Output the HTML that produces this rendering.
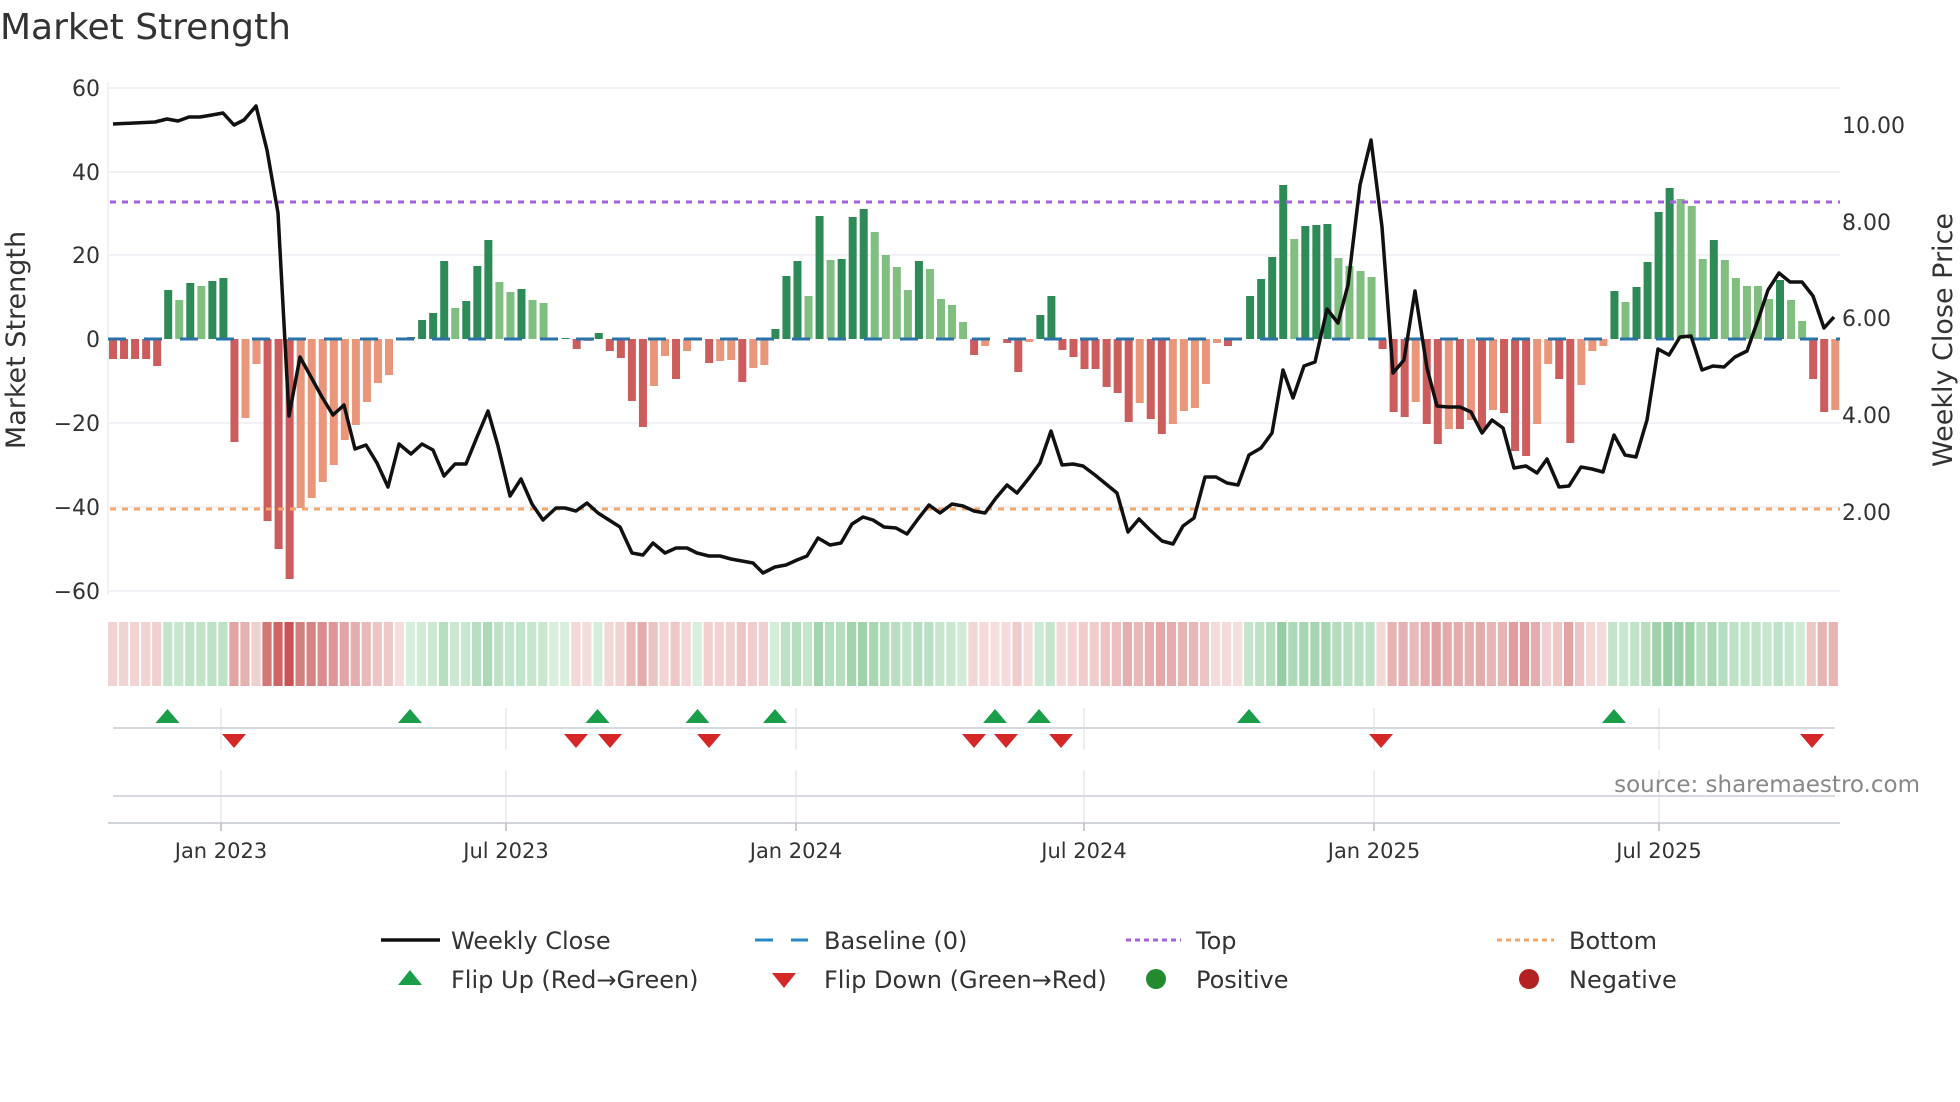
<!DOCTYPE html>
<html><head><meta charset="utf-8"><style>
html,body{margin:0;padding:0;background:#fff;}
svg{display:block;font-family:"DejaVu Sans","Liberation Sans",sans-serif;}
</style></head><body>
<svg id="s" width="1960" height="1102" viewBox="0 0 1960 1102" xmlns="http://www.w3.org/2000/svg">
<rect width="1960" height="1102" fill="#fff"/>
<text x="0" y="39" font-size="36" fill="#333">Market Strength</text>
<g stroke="#eceef3" stroke-width="1.5">
<line x1="108" y1="88" x2="1840" y2="88"/><line x1="108" y1="172" x2="1840" y2="172"/>
<line x1="108" y1="255" x2="1840" y2="255"/><line x1="108" y1="423" x2="1840" y2="423"/>
<line x1="108" y1="507" x2="1840" y2="507"/><line x1="108" y1="591" x2="1840" y2="591"/>
<line x1="108" y1="82" x2="108" y2="595"/>
</g>
<g font-size="22" fill="#333" text-anchor="end">
<text x="100" y="96">60</text><text x="100" y="180">40</text><text x="100" y="263">20</text>
<text x="100" y="347">0</text><text x="100" y="431">−20</text><text x="100" y="515">−40</text><text x="100" y="599">−60</text>
</g>
<g font-size="22" fill="#333">
<text x="1842" y="133">10.00</text><text x="1842" y="230">8.00</text><text x="1842" y="326">6.00</text>
<text x="1842" y="423">4.00</text><text x="1842" y="520">2.00</text>
</g>
<text transform="translate(25,340) rotate(-90)" font-size="27" fill="#333" text-anchor="middle">Market Strength</text>
<text transform="translate(1952,340) rotate(-90)" font-size="27" fill="#333" text-anchor="middle">Weekly Close Price</text>
<g id="bars"></g>
<line x1="108" y1="339" x2="1840" y2="339" stroke="#2a72a8" stroke-width="3" stroke-dasharray="18,18"/>
<line x1="110" y1="202" x2="1840" y2="202" stroke="#a461e0" stroke-width="3" stroke-dasharray="6,6"/>
<line x1="110" y1="509" x2="1840" y2="509" stroke="#f2a86b" stroke-width="3" stroke-dasharray="6,6"/>
<polyline id="pl" fill="none" stroke="#111" stroke-width="3.5" stroke-linejoin="round"/>
<g id="strip"></g>
<g stroke="#e6e9ee" stroke-width="1.5">
<line x1="221" y1="708" x2="221" y2="750"/><line x1="506" y1="708" x2="506" y2="750"/><line x1="796" y1="708" x2="796" y2="750"/>
<line x1="1084" y1="708" x2="1084" y2="750"/><line x1="1374" y1="708" x2="1374" y2="750"/><line x1="1659" y1="708" x2="1659" y2="750"/>
<line x1="221" y1="770" x2="221" y2="823"/><line x1="506" y1="770" x2="506" y2="823"/><line x1="796" y1="770" x2="796" y2="823"/>
<line x1="1084" y1="770" x2="1084" y2="823"/><line x1="1374" y1="770" x2="1374" y2="823"/><line x1="1659" y1="770" x2="1659" y2="823"/>
</g>
<line x1="113" y1="728" x2="1835" y2="728" stroke="#d6d9de" stroke-width="2"/>
<line x1="113" y1="796" x2="1835" y2="796" stroke="#d6d9de" stroke-width="2"/>
<line x1="108" y1="823" x2="1840" y2="823" stroke="#d0d3d8" stroke-width="2"/>
<g stroke="#bbb" stroke-width="1.5">
<line x1="221" y1="823" x2="221" y2="831"/><line x1="506" y1="823" x2="506" y2="831"/><line x1="796" y1="823" x2="796" y2="831"/>
<line x1="1084" y1="823" x2="1084" y2="831"/><line x1="1374" y1="823" x2="1374" y2="831"/><line x1="1659" y1="823" x2="1659" y2="831"/>
</g>
<g id="tri"></g>
<g font-size="21" fill="#333" text-anchor="middle">
<text x="221" y="858">Jan 2023</text><text x="506" y="858">Jul 2023</text><text x="796" y="858">Jan 2024</text>
<text x="1084" y="858">Jul 2024</text><text x="1374" y="858">Jan 2025</text><text x="1659" y="858">Jul 2025</text>
</g>
<text x="1920" y="792" font-size="23" fill="#888" text-anchor="end">source: sharemaestro.com</text>
<g font-size="24" fill="#333">
<line x1="381" y1="940" x2="440" y2="940" stroke="#111" stroke-width="3.5"/>
<text x="451" y="949">Weekly Close</text>
<line x1="755" y1="940" x2="808" y2="940" stroke="#2a88c8" stroke-width="3" stroke-dasharray="18,18"/>
<text x="824" y="949">Baseline (0)</text>
<line x1="1126" y1="940" x2="1181" y2="940" stroke="#a461e0" stroke-width="3" stroke-dasharray="5,4"/>
<text x="1196" y="949">Top</text>
<line x1="1497" y1="940" x2="1554" y2="940" stroke="#f2a86b" stroke-width="3" stroke-dasharray="5,4"/>
<text x="1569" y="949">Bottom</text>
<polygon points="398,985 422,985 410,970" fill="#1a9e4a"/>
<text x="451" y="988">Flip Up (Red→Green)</text>
<polygon points="772,973 796,973 784,988" fill="#d62728"/>
<text x="824" y="988">Flip Down (Green→Red)</text>
<circle cx="1156" cy="979" r="10" fill="#228b30"/>
<text x="1196" y="988">Positive</text>
<circle cx="1529" cy="979" r="10" fill="#b22222"/>
<text x="1569" y="988">Negative</text>
</g>
</svg>
<script>
var NS="http://www.w3.org/2000/svg";
var v="-20d,-20d,-20d,-20d,-27d,49d,39l,56d,53l,58d,61d,-103d,-79l,-25l,-182d,-210d,-240d,-169l,-159l,-143l,-126l,-101l,-86l,-63l,-44l,-36l,-1l,2d,19d,26d,78d,31l,38d,73d,99d,57l,47l,50d,39l,36l,0l,1d,-10d,-2l,6d,-12d,-19d,-62d,-88d,-47l,-17l,-40d,-12l,1d,-24d,-22l,-21l,-43d,-29l,-26l,10d,63d,78d,43l,123d,79l,80d,122d,130d,107l,84l,72l,49l,78d,70l,40l,34l,17l,-16d,-7l,0l,-4d,-33d,-3l,24d,43d,-11d,-18d,-30d,-30d,-48d,-54d,-83d,-64l,-80d,-95d,-85l,-72l,-69l,-45l,-4l,-7d,0l,43d,60d,82d,154d,100l,113d,114d,115d,81l,73l,68l,62l,-10d,-73d,-78d,-63l,-85d,-105d,-90l,-90d,-81l,-90d,-71l,-74d,-112d,-117d,-85l,-25l,-40d,-104d,-46l,-12l,-7l,48d,37l,52d,77d,127d,151d,140l,133l,80l,99d,79l,61l,53l,53l,40l,59d,39l,18l,-40d,-73d,-71l".split(",");
var bars=document.getElementById("bars"),strip=document.getElementById("strip");
var prev=-1;
function mix(a,b,t){return "rgb("+a.map(function(x,i){return Math.round(x+(b[i]-x)*t)}).join(",")+")";}
for(var i=0;i<v.length;i++){
 var h=parseFloat(v[i]),d=v[i].slice(-1)=="d";
 var cx=113+11.04*i;
 if(h!=0){
  var r=document.createElementNS(NS,"rect");
  r.setAttribute("x",cx-4);r.setAttribute("width",8);
  if(h>0){r.setAttribute("y",339-h);r.setAttribute("height",h);r.setAttribute("fill",d?"#2e8b57":"#80bf80");}
  else{r.setAttribute("y",339);r.setAttribute("height",-h);r.setAttribute("fill",d?"#cd5c5c":"#e9967a");}
  bars.appendChild(r);
 }
 var s=h>0?1:(h<0?-1:prev);prev=s;
 var t=Math.min(1,Math.abs(h)/240);
 var c=s>0?mix([216,239,221],[110,186,128],t):mix([245,222,222],[200,85,85],t);
 var q=document.createElementNS(NS,"rect");
 q.setAttribute("x",108+11.03*i);q.setAttribute("width",9.2);q.setAttribute("y",622);q.setAttribute("height",64);q.setAttribute("fill",c);
 strip.appendChild(q);
}
document.getElementById("pl").setAttribute("points","113,124 155,122 167,119 178,121 189,117 200,117 212,115 223,113 234,125 244,120 256,106 267,150 278,213 289,416 300,357 322,397 333,415 344,405 355,449 366,445 377,463 388,487 399,444 411,454 422,444 433,450 444,476 455,464 466,464 477,437 488,411 498,446 510,496 521,479 532,504 543,520 556,508 565,508 576,511 587,503 598,513 609,520 620,527 632,553 643,555 653,543 665,553 676,548 687,548 697,553 709,556 720,556 731,559 742,561 753,563 763,573 775,567 786,565 797,560 807,556 818,538 830,545 841,543 852,524 863,517 873,520 884,527 896,528 907,534 918,519 929,505 940,513 952,504 963,506 974,511 985,513 996,498 1007,485 1017,493 1029,478 1040,463 1051,431 1062,465 1073,464 1083,466 1095,475 1106,484 1117,493 1128,532 1139,519 1150,530 1162,541 1173,544 1183,526 1194,518 1205,477 1216,477 1227,483 1238,485 1249,455 1261,448 1272,433 1283,370 1293,398 1304,366 1315,362 1327,309 1338,323 1348,285 1360,185 1371,140 1382,227 1393,373 1404,360 1415,291 1427,368 1437,406 1448,407 1460,407 1471,412 1482,433 1492,420 1503,428 1514,468 1526,466 1537,473 1547,459 1559,487 1569,486 1581,467 1592,469 1603,472 1614,435 1625,455 1636,457 1647,420 1658,349 1669,355 1680,337 1691,336 1702,370 1713,366 1724,367 1735,357 1747,351 1758,320 1768,290 1779,273 1790,282 1802,282 1813,296 1824,328 1834,317");
var tri=document.getElementById("tri");
[167.5,410,597.5,697.5,775,995,1039,1249,1614].forEach(function(x){
 var p=document.createElementNS(NS,"polygon");p.setAttribute("points",(x-12)+",723 "+(x+12)+",723 "+x+",709");p.setAttribute("fill","#1a9e4a");tri.appendChild(p);});
[234,576,610,709,974,1006,1061,1381,1812].forEach(function(x){
 var p=document.createElementNS(NS,"polygon");p.setAttribute("points",(x-12)+",734 "+(x+12)+",734 "+x+",748");p.setAttribute("fill","#d62728");tri.appendChild(p);});
</script>
</body></html>
